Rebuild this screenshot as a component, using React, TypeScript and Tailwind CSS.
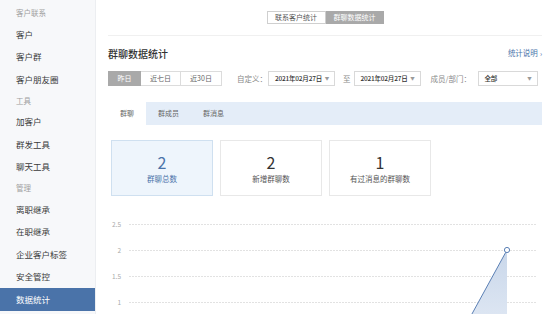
import type { ReactNode } from 'react'

type NavEntry = { kind: 'label' | 'item'; text: string; active?: boolean }

const nav: NavEntry[] = [
  { kind: 'label', text: '客户联系' },
  { kind: 'item', text: '客户' },
  { kind: 'item', text: '客户群' },
  { kind: 'item', text: '客户朋友圈' },
  { kind: 'label', text: '工具' },
  { kind: 'item', text: '加客户' },
  { kind: 'item', text: '群发工具' },
  { kind: 'item', text: '聊天工具' },
  { kind: 'label', text: '管理' },
  { kind: 'item', text: '离职继承' },
  { kind: 'item', text: '在职继承' },
  { kind: 'item', text: '企业客户标签' },
  { kind: 'item', text: '安全管控' },
  { kind: 'item', text: '数据统计', active: true },
]

function Sidebar() {
  return (
    <aside className="w-[96px] shrink-0 border-r border-[#eceef1] bg-[#f7f8fa] pt-[3px]">
      {nav.map((n) =>
        n.kind === 'label' ? (
          <div key={n.text} className="flex h-[20px] items-center pl-[16px] text-[7.5px] text-[#a0a0a0]">
            {n.text}
          </div>
        ) : (
          <div
            key={n.text}
            className={`flex h-[22.5px] items-center pl-[16px] text-[8.5px] ${
              n.active ? 'bg-[#4a73a9] text-white' : 'text-[#3a3a3a]'
            }`}
          >
            {n.text}
          </div>
        ),
      )}
    </aside>
  )
}

function Select({ value, width }: { value: string; width: string }) {
  return (
    <div
      className={`flex h-[15px] items-center justify-between border border-[#d9d9d9] bg-white pl-[6px] pr-[5px] text-[6.5px] font-medium tracking-[-0.2px] text-[#333] ${width}`}
    >
      <span>{value}</span>
      <span className="text-[4.5px] text-[#999]">▼</span>
    </div>
  )
}

function StatCard({ value, label, active }: { value: string; label: ReactNode; active?: boolean }) {
  return (
    <div
      className={`flex h-[56px] w-[102px] flex-col items-center justify-center border ${
        active ? 'border-[#cfe0f0] bg-[#eef5fc] text-[#4a73a9]' : 'border-[#e8e8e8] bg-white text-[#333]'
      }`}
    >
      <div className="text-[16px] leading-[20px]">{value}</div>
      <div className={`mt-[1px] text-[7.5px] ${active ? 'text-[#4a73a9]' : 'text-[#555]'}`}>{label}</div>
    </div>
  )
}

function Chart() {
  const grid = [
    { y: 14, t: '2.5' },
    { y: 40, t: '2' },
    { y: 66, t: '1.5' },
    { y: 92, t: '1' },
  ]
  return (
    <svg width="434" height="104" className="mt-[14px] block">
      <defs>
        <linearGradient id="fill" x1="0" y1="0" x2="0" y2="1">
          <stop offset="0" stopColor="#c9d7ea" />
          <stop offset="1" stopColor="#e8eef7" />
        </linearGradient>
      </defs>
      {grid.map((g) => (
        <g key={g.t}>
          <line x1="21" x2="429" y1={g.y + 0.5} y2={g.y + 0.5} stroke="#e2e2e2" strokeDasharray="2 1" />
          <text x="13" y={g.y + 2.5} textAnchor="end" fontSize="6.5" fill="#aaa">
            {g.t}
          </text>
        </g>
      ))}
      <polygon points="342,144 399,40 399,144" fill="url(#fill)" />
      <line x1="342" y1="144" x2="399" y2="40" stroke="#5b80b5" strokeWidth="1" />
      <circle cx="399" cy="40" r="2.6" fill="white" stroke="#5b80b5" strokeWidth="1" />
    </svg>
  )
}

export default function App() {
  return (
    <div className="flex h-[314px] w-[554px] overflow-hidden whitespace-nowrap bg-white font-['Noto_Sans_CJK_SC','Noto_Sans',sans-serif]">
      <Sidebar />
      <main className="flex-1 px-[12px] pt-[11px]">
        <div className="flex justify-center">
          <div className="flex h-[13px] text-[7px]">
            <div className="flex w-[59px] items-center justify-center border border-[#cfcfcf] text-[#555]">
              联系客户统计
            </div>
            <div className="flex w-[58px] items-center justify-center bg-[#a9a9a9] text-white">群聊数据统计</div>
          </div>
        </div>
        <div className="mt-[11px] h-px bg-[#f0f0f0]" />
        <div className="mt-[8px] flex h-[18px] items-center justify-between">
          <span className="text-[10px] font-medium text-[#333]">群聊数据统计</span>
          <span className="flex items-center gap-[2px] text-[7.5px] text-[#4a73a9]">
            统计说明<span className="text-[7px]">›</span>
          </span>
        </div>
        <div className="mt-[9px] flex h-[15px] items-center text-[7px]">
          <div className="flex h-[15px]">
            <div className="flex w-[33px] items-center justify-center bg-[#a9a9a9] text-white">昨日</div>
            <div className="flex w-[40px] items-center justify-center border border-l-0 border-[#dcdcdc] text-[#666]">
              近七日
            </div>
            <div className="flex w-[41px] items-center justify-center border border-l-0 border-[#dcdcdc] text-[#666]">
              近30日
            </div>
          </div>
          <span className="ml-[15px] w-[31px] text-[7.5px] text-[#888]">自定义：</span>
          <Select value="2021年02月27日" width="w-[67px]" />
          <span className="ml-[8px] mr-[3px] text-[7.5px] text-[#888]">至</span>
          <Select value="2021年02月27日" width="w-[67px]" />
          <span className="ml-[10px] w-[47px] text-[7.5px] text-[#888]">成员/部门：</span>
          <Select value="全部" width="w-[60px]" />
        </div>
        <div className="mt-[16px] flex h-[23px] bg-[#e4edf8] text-[7px] text-[#666]">
          <div className="flex items-center bg-white px-[12px]">群聊</div>
          <div className="flex items-center px-[12px]">群成员</div>
          <div className="flex items-center px-[12px]">群消息</div>
        </div>
        <div className="mt-[15px] flex gap-[7px] pl-[3px]">
          <StatCard value="2" label="群聊总数" active />
          <StatCard value="2" label="新增群聊数" />
          <StatCard value="1" label="有过消息的群聊数" />
        </div>
        <Chart />
      </main>
    </div>
  )
}
